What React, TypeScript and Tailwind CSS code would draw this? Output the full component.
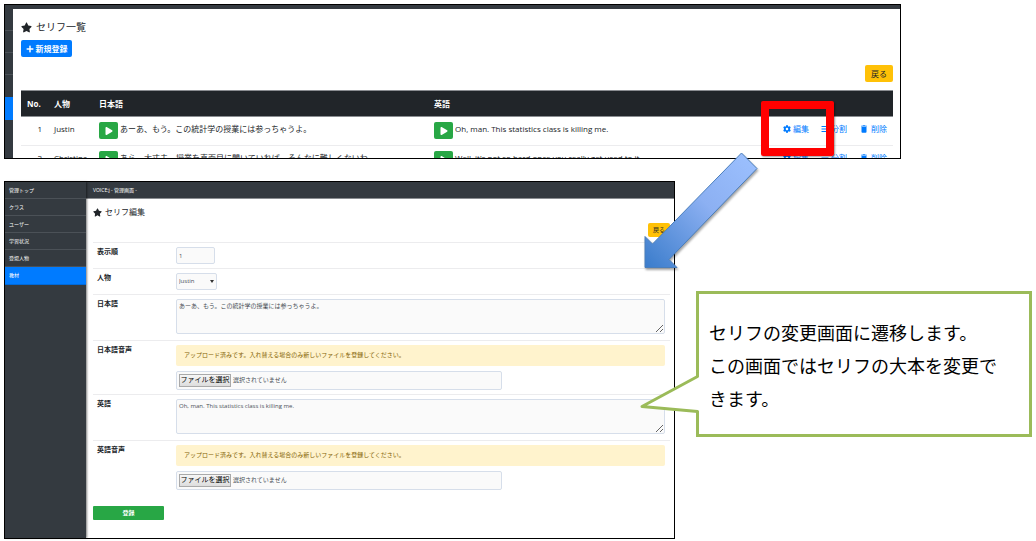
import type { ReactNode } from 'react';
import { FaBars, FaCog, FaPlay, FaPlus, FaStar } from 'react-icons/fa';
import { MdDelete } from 'react-icons/md';

const menuItems = ['管理トップ', 'クラス', 'ユーザー', '学習状況', '登場人物', '教材'];

const lines = [
  {
    no: 1,
    person: 'Justin',
    ja: 'あーあ、もう。この統計学の授業には参っちゃうよ。',
    en: 'Oh, man. This statistics class is killing me.',
  },
  {
    no: 2,
    person: 'Christina',
    ja: 'あら、大丈夫。授業を真面目に聞いていれば、そんなに難しくないわ。',
    en: "Well, it's not so hard once you really get used to it.",
  },
];

function PlayButton({ label }: { label: string }) {
  return (
    <button
      type="button"
      aria-label={label}
      className="flex h-[17px] w-[19px] shrink-0 items-center justify-center rounded-xs bg-[#28a745] text-white"
    >
      <FaPlay size={8} />
    </button>
  );
}

function ActionLink({ icon, text }: { icon: ReactNode; text: string }) {
  return (
    <a href="#" className="flex items-center gap-0.5 text-[#007bff]">
      {icon}
      {text}
    </a>
  );
}

function LineTable() {
  return (
    <table className="mt-2 w-full table-fixed border-collapse text-[8px] leading-[14px]">
      <thead>
        <tr className="h-[26px] border-y border-[#8a8d91] bg-[#212529] text-left text-white">
          <th className="w-[27px] px-1.5">No.</th>
          <th className="w-[45px] px-1.5">人物</th>
          <th className="w-[335px] px-1.5">日本語</th>
          <th className="px-1.5">英語</th>
          <th className="w-[117px] px-1.5" aria-label="操作" />
        </tr>
      </thead>
      <tbody>
        {lines.map((line) => (
          <tr key={line.no} className="h-[29px] border-b border-[#ececee] align-top whitespace-nowrap">
            <td className="px-1.5 pt-[5px] text-right">{line.no}</td>
            <td className="px-1.5 pt-[5px]">{line.person}</td>
            <td className="px-1.5 pt-[5px]">
              <div className="flex items-start gap-0.5">
                <PlayButton label="日本語を再生" />
                {line.ja}
              </div>
            </td>
            <td className="px-1.5 pt-[5px]">
              <div className="flex items-start gap-0.5">
                <PlayButton label="英語を再生" />
                {line.en}
              </div>
            </td>
            <td className="px-1.5 pt-[5px]">
              <div className="flex justify-end gap-3">
                <ActionLink icon={<FaCog size={8} />} text="編集" />
                <ActionLink icon={<FaBars size={8} />} text="分割" />
                <ActionLink icon={<MdDelete size={10} />} text="削除" />
              </div>
            </td>
          </tr>
        ))}
      </tbody>
    </table>
  );
}

function ListScreen() {
  return (
    <section className="relative mr-[131px] flex h-[155px] overflow-hidden border border-black bg-[#343a40]">
      <div className="w-2 shrink-0">
        <div className="h-[26px] border-b border-[#4b5157]" />
        <div className="h-[22px] border-b border-[#4b5157]" />
        <div className="h-[22px] border-b border-[#4b5157]" />
        <div className="h-[22px]" />
        <div className="h-[23px] bg-[#007bff]" />
      </div>
      <div className="mt-1 flex-1 bg-white px-[7px] pt-3 pl-2">
        <h1 className="flex h-3 items-center gap-1 text-[10px]">
          <FaStar size={11} />
          セリフ一覧
        </h1>
        <button
          type="button"
          className="mt-[7px] flex h-[17px] w-[51px] items-center justify-center gap-0.5 rounded-xs bg-[#007bff] text-[8px] font-bold text-white"
        >
          <FaPlus size={8} />
          新規登録
        </button>
        <button
          type="button"
          className="mt-2 ml-auto block h-[17px] w-7 rounded-xs bg-[#ffc107] text-[8px] leading-[17px]"
        >
          戻る
        </button>
        <LineTable />
      </div>
      {/* highlight around the edit link */}
      <div className="absolute top-24 right-[66px] h-[55px] w-[73px] rounded-xs border-8 border-[#ff0000] shadow-[1px_1px_2px_rgba(0,0,0,0.4)]" />
    </section>
  );
}

function FormRow({ id, label, children }: { id: string; label: string; children: ReactNode }) {
  return (
    <div className="flex border-t border-[#ececee] py-1 pr-[5px] pl-1">
      <label htmlFor={id} className="w-[79px] shrink-0 text-[7px] leading-[10px] font-bold">
        {label}
      </label>
      <div className="min-w-0 flex-1">{children}</div>
    </div>
  );
}

function VoiceField({ id }: { id: string }) {
  return (
    <>
      <p className="h-[21px] rounded-xs bg-[#fff3cd] px-2 text-[6px] leading-[21px] text-[#856404]">
        アップロード済みです。入れ替える場合のみ新しいファイルを登録してください。
      </p>
      <div className="relative mt-[5px] flex h-[19px] w-2/3 items-center gap-0.5 rounded-xs border border-[#d6deea] bg-[#fafafa] px-0.5 text-[6px] text-[#495057]">
        <input id={id} type="file" className="sr-only" />
        <label
          htmlFor={id}
          className="flex h-[13px] w-[52px] items-center justify-center border border-[#a9a9a9] bg-linear-to-b from-[#f6f6f6] to-[#dddddd] text-[7px] text-black"
        >
          ファイルを選択
        </label>
        選択されていません
      </div>
    </>
  );
}

const fieldClass =
  'block rounded-xs border border-[#d6deea] bg-[#fafafa] px-0.5 text-[6px] text-[#495057]';

function EditScreen() {
  return (
    <section className="flex min-w-0 flex-1 border border-black bg-white">
      <nav className="relative w-[81px] shrink-0 bg-[#343a40] text-[5px] leading-4 text-white shadow-[1px_0_2px_rgba(0,0,0,0.5)]">
        {menuItems.map((item) => (
          <a
            key={item}
            href="#"
            className={
              item === '教材'
                ? 'block h-[18px] border-b border-[#0069d9] bg-[#007bff] px-1'
                : 'block h-[17px] border-b border-[#4b5157] px-1'
            }
          >
            {item}
          </a>
        ))}
      </nav>
      <div className="min-w-0 flex-1">
        <header className="h-[17px] border-b border-[#8a8d91] bg-[#343a40] px-[7px] text-[5px] leading-4 text-white">
          VOICE:j - 管理画面 -
        </header>
        <div className="pt-[7px] pr-1 pb-[18px] pl-[7px]">
          <h2 className="flex h-3 items-center gap-[3px] text-[8px]">
            <FaStar size={9} />
            セリフ編集
          </h2>
          <button
            type="button"
            className="mt-[5px] mb-[5px] ml-auto block h-[14px] w-[22px] rounded-xs bg-[#ffc107] text-[6px] leading-[14px]"
          >
            戻る
          </button>
          <form>
            <FormRow id="order" label="表示順">
              <input id="order" type="text" defaultValue="1" className={`${fieldClass} h-[17px] w-[39px]`} />
            </FormRow>
            <FormRow id="person" label="人物">
              <div className="relative w-[41px]">
                <select id="person" className={`${fieldClass} h-[17px] w-full appearance-none`}>
                  <option>Justin</option>
                </select>
                <svg viewBox="0 0 4 3" className="pointer-events-none absolute top-[7px] right-[3px] w-1 fill-[#333333]">
                  <path d="M0 0h4L2 3z" />
                </svg>
              </div>
            </FormRow>
            <FormRow id="ja" label="日本語">
              <textarea id="ja" className={`${fieldClass} mb-0.5 h-[35px] w-full py-0.5`} defaultValue={lines[0].ja} />
            </FormRow>
            <FormRow id="ja-voice" label="日本語音声">
              <VoiceField id="ja-voice" />
            </FormRow>
            <FormRow id="en" label="英語">
              <textarea id="en" className={`${fieldClass} mb-0.5 h-[35px] w-full py-0.5`} defaultValue={lines[0].en} />
            </FormRow>
            <FormRow id="en-voice" label="英語音声">
              <VoiceField id="en-voice" />
            </FormRow>
            <button
              type="submit"
              className="mt-3 block h-[14px] w-[71px] rounded-[1px] bg-[#28a745] text-[6px] leading-[14px] font-bold text-white"
            >
              登録
            </button>
          </form>
        </div>
      </div>
    </section>
  );
}

function Callout() {
  return (
    <aside className="relative mt-[110px] w-[336px] shrink-0 self-start border-3 border-[#9bbb59] bg-white pt-[23px] pr-5 pb-[18px] pl-2.5 text-[18px] leading-[33px] text-black">
      <p>
        セリフの変更画面に遷移します。
        <br />
        この画面ではセリフの大本を変更できます。
      </p>
      <svg viewBox="0 0 62 48" className="absolute top-[76px] -left-[61px] h-12 w-[62px]">
        <path d="M59.500 6.500 4 37l55.500 4.500H62v-35z" fill="#ffffff" />
        <path d="M59.500 4v2.500L4 36.500l55.500 5V44" fill="none" stroke="#9bbb59" strokeWidth="3" strokeLinejoin="round" />
      </svg>
    </aside>
  );
}

function Arrow() {
  return (
    <svg viewBox="640 150 125 125" className="absolute -top-[31px] right-[267px] size-[125px] drop-shadow-[1px_2px_1px_rgba(0,0,0,0.35)]">
      <defs>
        <linearGradient id="arrow" x1="1" y1="0" x2="0" y2="1">
          <stop offset="0" stopColor="#9dc1ff" />
          <stop offset="0.45" stopColor="#8cb0f2" />
          <stop offset="1" stopColor="#3a7ccb" />
        </linearGradient>
      </defs>
      <path
        d="M741.500 153 757 168.500 669 259.500 677 267.500H645V236.500L652.500 244z"
        fill="url(#arrow)"
        stroke="#4a7ebb"
        strokeWidth="1"
      />
    </svg>
  );
}

export default function App() {
  return (
    <main className="min-h-screen bg-white p-1 pb-0.5 font-['Open_Sans','Noto_Sans_CJK_JP',sans-serif] text-[#212529]">
      <ListScreen />
      <div className="relative mt-[22px] flex gap-[21px]">
        <EditScreen />
        <Callout />
        <Arrow />
      </div>
    </main>
  );
}
